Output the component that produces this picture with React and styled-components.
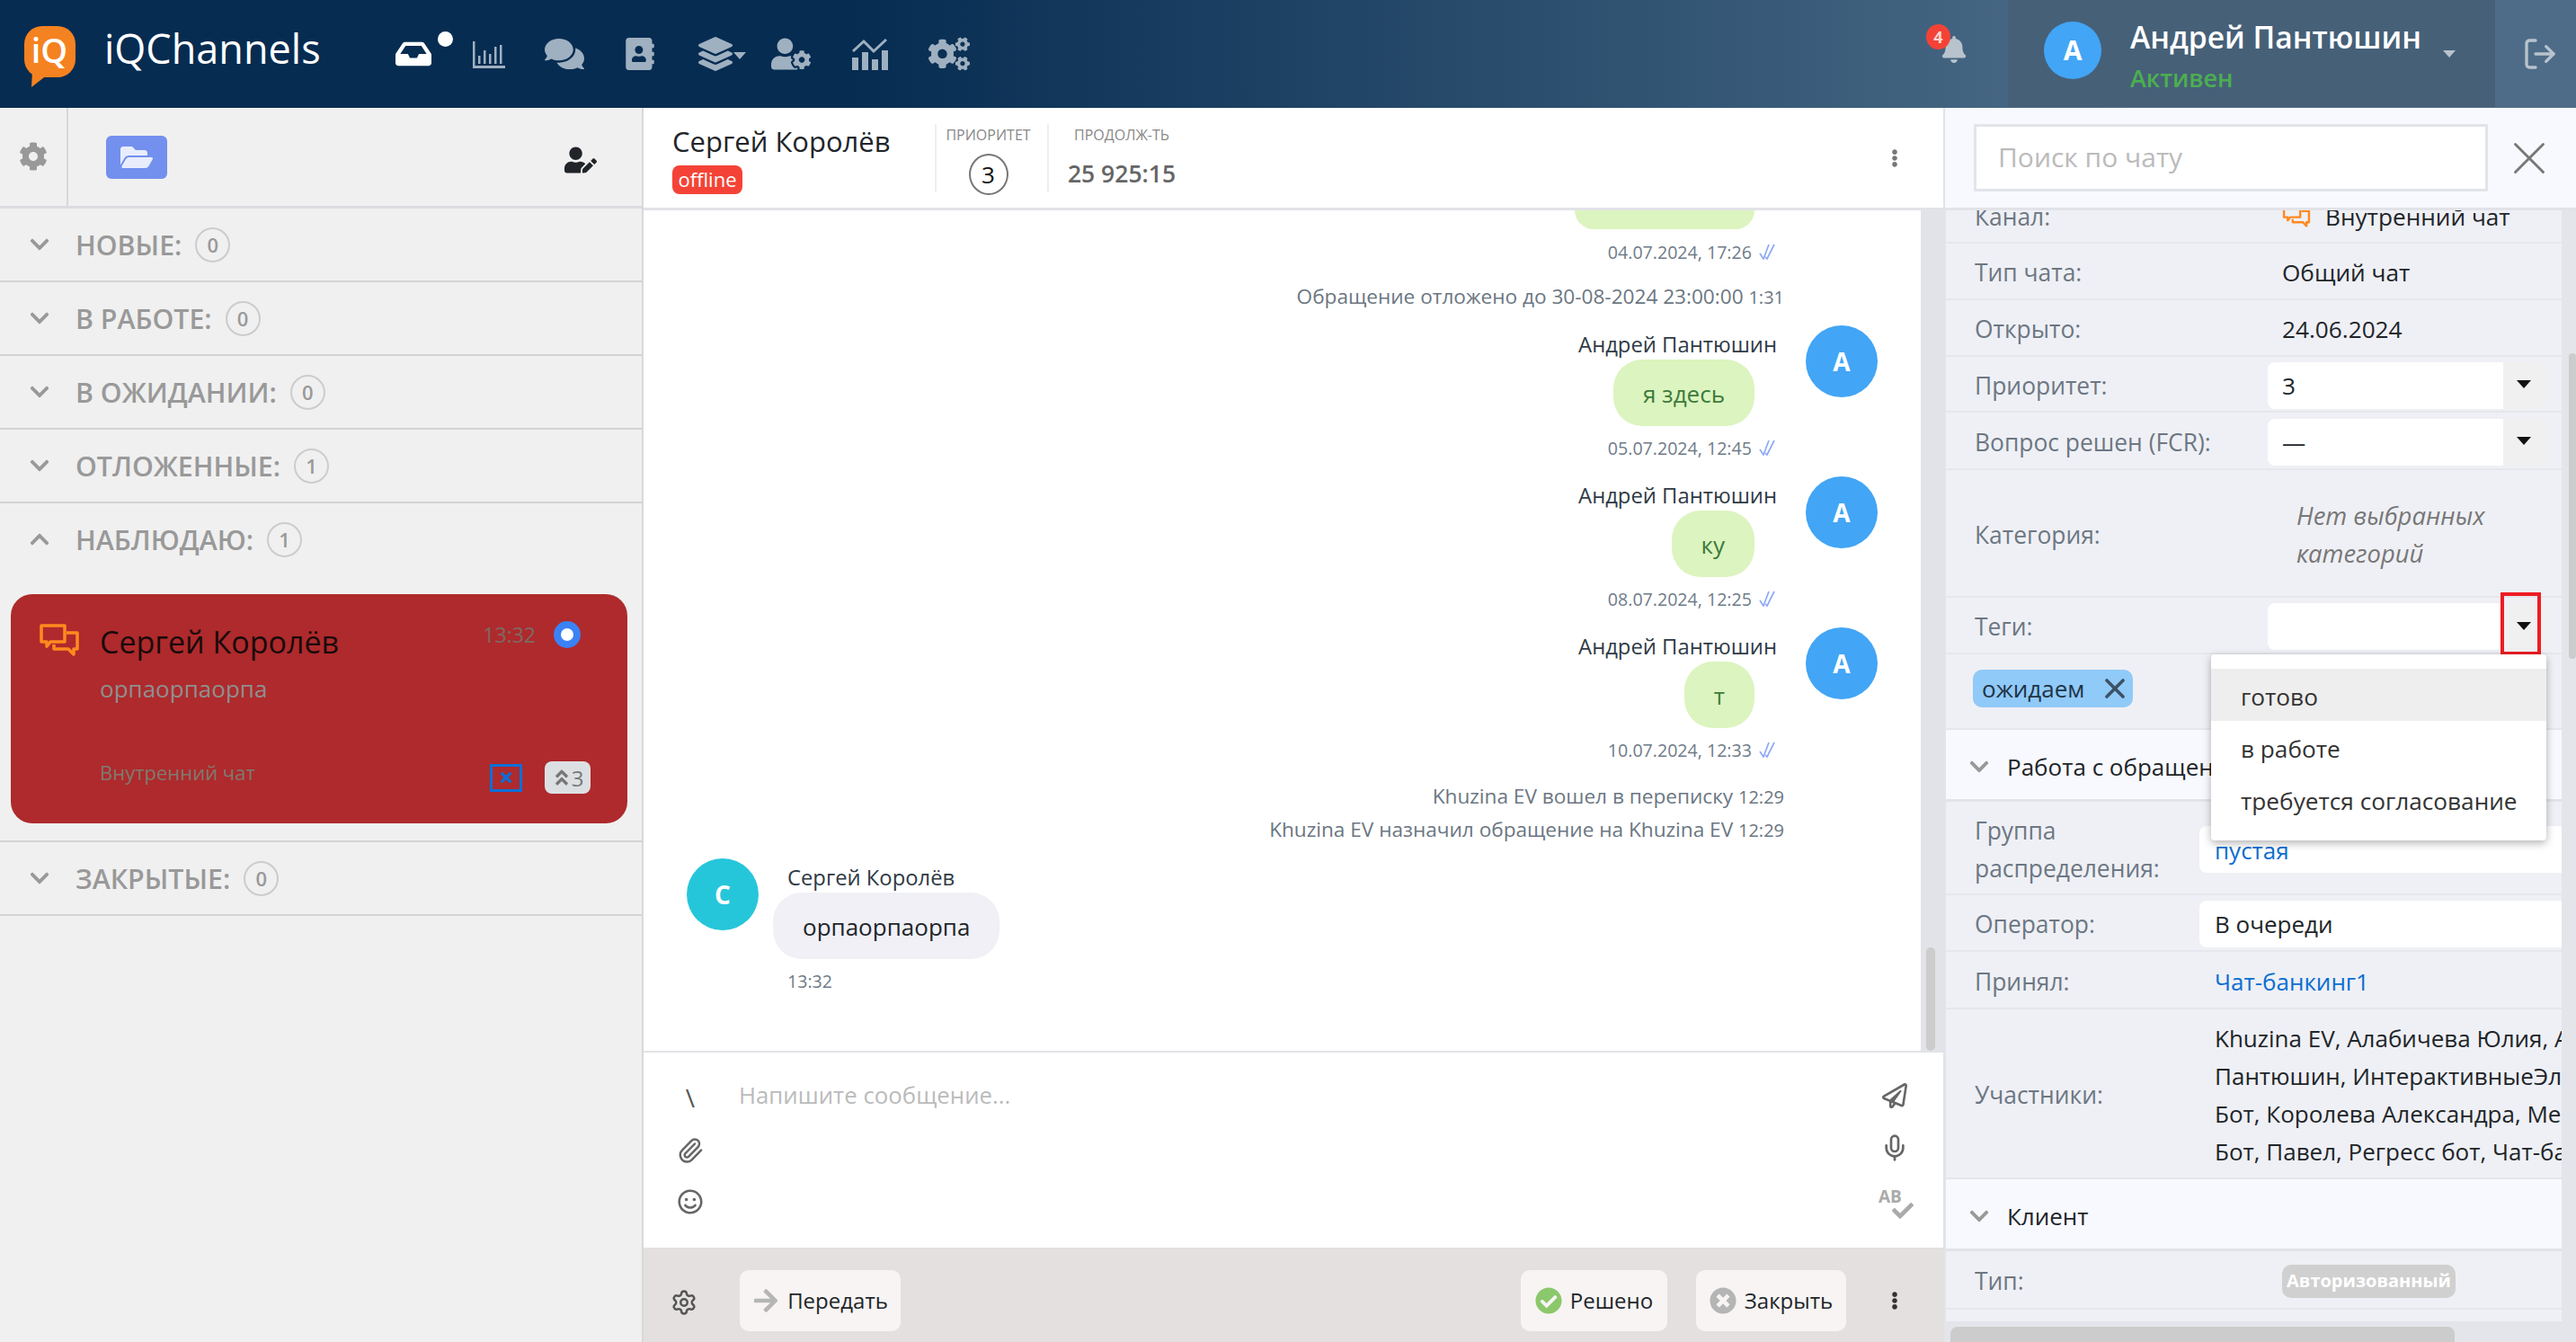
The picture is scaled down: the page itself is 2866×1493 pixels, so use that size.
import React from "react";
import styled, { createGlobalStyle } from "styled-components";
import {
    FaInbox,
    FaComments,
    FaAddressBook,
    FaLayerGroup,
    FaUserCog,
    FaCogs,
    FaCog,
    FaFolderOpen,
    FaUserEdit,
    FaBell,
    FaChevronDown,
    FaChevronUp,
    FaRegPaperPlane,
    FaRegSmile,
    FaCheck,
    FaCheckCircle,
    FaTimesCircle,
    FaArrowRight,
    FaAngleDoubleUp,
    FaTimes,
    FaEllipsisV,
} from "react-icons/fa";
import { LogOut, Paperclip, Mic, Settings, X } from "lucide-react";

const GlobalStyle = createGlobalStyle`
    html, body {
        margin: 0;
        padding: 0;
        width: 2866px;
        height: 1493px;
        overflow: hidden;
        font-family: "Open Sans", "Noto Sans", sans-serif;
        font-size: 26px;
        color: #212529;
    }
    * {
        box-sizing: border-box;
    }
`;

const Logo = () => (
    <svg width="58" height="70" viewBox="0 0 58 70">
        <rect x="0" y="0" width="57" height="57" rx="20" fill="#f58220" />
        <polygon points="9,50 26,54 8,68" fill="#f58220" />
        <text x="28" y="41" textAnchor="middle" fill="#fff" fontSize="38" fontWeight="600" fontFamily="Open Sans">
            iQ
        </text>
    </svg>
);

const ThinBars = () => (
    <svg width="36" height="32" viewBox="0 0 36 32" fill="#9fb0c0">
        <rect x="0" y="2" width="2.5" height="30" />
        <rect x="0" y="29" width="36" height="3" />
        <rect x="6" y="18" width="2.5" height="9" />
        <rect x="12" y="12" width="2.5" height="15" />
        <rect x="18" y="16" width="2.5" height="11" />
        <rect x="24" y="8" width="2.5" height="19" />
        <rect x="30" y="6" width="2.5" height="21" />
    </svg>
);

const ChartLine = () => (
    <svg width="42" height="36" viewBox="0 0 42 36" fill="#9fb0c0">
        <rect x="1" y="22" width="7" height="14" />
        <rect x="12" y="16" width="7" height="20" />
        <rect x="23" y="24" width="7" height="12" />
        <rect x="34" y="14" width="7" height="22" />
        <polyline points="2,15 14,4 25,15 39,2" fill="none" stroke="#9fb0c0" strokeWidth="3" />
    </svg>
);

const ChatOutline = ({ size = 46 }) => (
    <svg width={size} height={size * 0.85} viewBox="0 0 46 39" fill="none" stroke="#ff8a1f" strokeWidth="3.5" strokeLinejoin="round">
        <path d="M3 3h26v18H13l-4 5v-5H3z" />
        <path d="M31 11h12v18h-4v6l-6-6H17v-5" />
    </svg>
);

const DoubleCheck = () => (
    <svg width="20" height="18" viewBox="0 0 20 18" fill="none" stroke="#8ea9f5" strokeWidth="1.7">
        <path d="M1 11l4 6 6-16" />
        <path d="M7 15l2 2 8-16" />
    </svg>
);

const App = () => {
    return (
        <Page>
            <GlobalStyle />
            <TopBar>
                <Brand>
                    <Logo />
                    <BrandName>iQChannels</BrandName>
                </Brand>
                <Nav>
                    <NavItem $w={84}>
                        <FaInbox size={40} color="#fff" />
                        <NavDot />
                    </NavItem>
                    <NavItem $w={84}>
                        <ThinBars />
                    </NavItem>
                    <NavItem $w={84}>
                        <FaComments size={44} color="#9fb0c0" />
                    </NavItem>
                    <NavItem $w={84}>
                        <FaAddressBook size={36} color="#9fb0c0" />
                    </NavItem>
                    <NavItem $w={84}>
                        <FaLayerGroup size={38} color="#9fb0c0" />
                        <NavCaret />
                    </NavItem>
                    <NavItem $w={84}>
                        <FaUserCog size={44} color="#9fb0c0" />
                    </NavItem>
                    <NavItem $w={92}>
                        <ChartLine />
                    </NavItem>
                    <NavItem $w={84}>
                        <FaCogs size={46} color="#9fb0c0" />
                    </NavItem>
                </Nav>
                <BellBox>
                    <FaBell size={30} color="#b8c3cd" />
                    <BellBadge>4</BellBadge>
                </BellBox>
                <UserBox>
                    <UserAvatar>А</UserAvatar>
                    <UserInfo>
                        <UserName>Андрей Пантюшин</UserName>
                        <UserStatus>Активен</UserStatus>
                    </UserInfo>
                    <UserCaret />
                </UserBox>
                <ExitBox>
                    <LogOut size={40} color="#b8c3cd" strokeWidth={2} />
                </ExitBox>
            </TopBar>

            <Main>
                <Sidebar>
                    <SideTools>
                        <GearCell>
                            <FaCog size={32} color="#999" />
                        </GearCell>
                        <FolderButton>
                            <FaFolderOpen size={36} color="#e8edfc" />
                        </FolderButton>
                        <UserEditCell>
                            <FaUserEdit size={36} color="#212529" />
                        </UserEditCell>
                    </SideTools>
                    <Group title="НОВЫЕ:" count={0} />
                    <Group title="В РАБОТЕ:" count={0} />
                    <Group title="В ОЖИДАНИИ:" count={0} />
                    <Group title="ОТЛОЖЕННЫЕ:" count={1} />
                    <Group title="НАБЛЮДАЮ:" count={1} open />
                    <CardHolder>
                        <ChatCard>
                            <CardIcon>
                                <ChatOutline />
                            </CardIcon>
                            <CardBody>
                                <CardTop>
                                    <CardName>Сергей Королёв</CardName>
                                    <CardTime>13:32</CardTime>
                                    <CardDot />
                                </CardTop>
                                <CardText>орпаорпаорпа</CardText>
                                <CardBottom>
                                    <CardChannel>Внутренний чат</CardChannel>
                                    <CrossBox>
                                        <FaTimes size={18} color="#0a6fd8" />
                                    </CrossBox>
                                    <PriorityBadge>
                                        <FaAngleDoubleUp size={22} color="#777" />3
                                    </PriorityBadge>
                                </CardBottom>
                            </CardBody>
                        </ChatCard>
                    </CardHolder>
                    <Group title="ЗАКРЫТЫЕ:" count={0} />
                </Sidebar>

                <Center>
                    <ChatHead>
                        <HeadTitle>
                            <HeadName>Сергей Королёв</HeadName>
                            <OfflinePill>offline</OfflinePill>
                        </HeadTitle>
                        <HeadStat $w={125} $pr={8}>
                            <StatLabel>ПРИОРИТЕТ</StatLabel>
                            <PriorityCircle>3</PriorityCircle>
                        </HeadStat>
                        <HeadStat $w={160} $pl={4}>
                            <StatLabel>ПРОДОЛЖ-ТЬ</StatLabel>
                            <StatValue>25 925:15</StatValue>
                        </HeadStat>
                        <HeadMenu>
                            <FaEllipsisV size={20} color="#777" />
                        </HeadMenu>
                    </ChatHead>

                    <ThreadWrap>
                        <Thread>
                            <ClippedBubble />
                            <Stamp $mt={11} $mr={25}>
                                04.07.2024, 17:26 <DoubleCheck />
                            </Stamp>
                            <SystemLine $mt={20}>
                                Обращение отложено до 30-08-2024 23:00:00 <small>1:31</small>
                            </SystemLine>
                            <OutMessage $mt={16} text="я здесь" date="05.07.2024, 12:45" />
                            <OutMessage $mt={18} text="ку" date="08.07.2024, 12:25" />
                            <OutMessage $mt={18} text="т" date="10.07.2024, 12:33" />
                            <SystemLine $mt={22}>
                                Khuzina EV вошел в переписку <small>12:29</small>
                            </SystemLine>
                            <SystemLine $mt={5}>
                                Khuzina EV назначил обращение на Khuzina EV <small>12:29</small>
                            </SystemLine>
                            <InRow>
                                <Avatar $bg="#26c6da">С</Avatar>
                                <MessageCol $align="flex-start">
                                    <Author $ml={16}>Сергей Королёв</Author>
                                    <Bubble $bg="#f0f0f6" $color="#212529">
                                        орпаорпаорпа
                                    </Bubble>
                                    <InStamp>13:32</InStamp>
                                </MessageCol>
                            </InRow>
                        </Thread>
                        <ThreadTrack>
                            <ThreadThumb />
                        </ThreadTrack>
                    </ThreadWrap>

                    <Composer>
                        <ComposerIcons>
                            <Backslash>\</Backslash>
                            <Paperclip size={30} color="#666" />
                            <FaRegSmile size={28} color="#666" />
                        </ComposerIcons>
                        <Placeholder>Напишите сообщение...</Placeholder>
                        <ComposerIcons>
                            <FaRegPaperPlane size={28} color="#666" />
                            <Mic size={32} color="#666" />
                            <SpellIcon>
                                AB
                                <FaCheck size={24} color="#aaa" />
                            </SpellIcon>
                        </ComposerIcons>
                    </Composer>

                    <Footer>
                        <FooterGear>
                            <Settings size={30} color="#555" />
                        </FooterGear>
                        <FooterButton $ml={47} $w={179}>
                            <FaArrowRight size={30} color="#b5b5b5" />
                            Передать
                        </FooterButton>
                        <FooterSpacer />
                        <FooterButton $w={163}>
                            <FaCheckCircle size={30} color="#8bc86b" />
                            Решено
                        </FooterButton>
                        <FooterButton $ml={32} $w={167}>
                            <FaTimesCircle size={30} color="#b5b5b5" />
                            Закрыть
                        </FooterButton>
                        <FooterDots>
                            <FaEllipsisV size={20} color="#333" />
                        </FooterDots>
                    </Footer>
                </Center>

                <Details>
                    <SearchBar>
                        <SearchInput>Поиск по чату</SearchInput>
                        <X size={62} color="#777" strokeWidth={1.1} />
                    </SearchBar>
                    <DetailsBody>
                        <DetailsView>
                            <RowList>
                                <Row $h={62}>
                                    <Label $w={342}>Канал:</Label>
                                    <ChannelValue>
                                        <ChatOutline size={32} />
                                        Внутренний чат
                                    </ChannelValue>
                                </Row>
                                <Row $h={63}>
                                    <Label $w={342}>Тип чата:</Label>
                                    <Value>Общий чат</Value>
                                </Row>
                                <Row $h={63}>
                                    <Label $w={342}>Открыто:</Label>
                                    <Value>24.06.2024</Value>
                                </Row>
                                <Row $h={62}>
                                    <Label $w={326}>Приоритет:</Label>
                                    <Select value="3" />
                                </Row>
                                <Row $h={64}>
                                    <Label $w={326}>Вопрос решен (FCR):</Label>
                                    <Select value="—" />
                                </Row>
                                <Row $h={142}>
                                    <Label $w={358}>Категория:</Label>
                                    <CategoryNote>
                                        Нет выбранных
                                        <br />
                                        категорий
                                    </CategoryNote>
                                </Row>
                                <TagsRow $h={63}>
                                    <Label $w={326}>Теги:</Label>
                                    <Select value="" />
                                    <RedMark />
                                    <TagsMenu>
                                        <TagsOption $active>готово</TagsOption>
                                        <TagsOption>в работе</TagsOption>
                                        <TagsOption>требуется согласование</TagsOption>
                                    </TagsMenu>
                                </TagsRow>
                                <TagLine>
                                    <Tag>
                                        ожидаем
                                        <X size={36} color="#3d5266" strokeWidth={2.4} />
                                    </Tag>
                                </TagLine>
                                <SectionHead>
                                    <FaChevronDown size={24} color="#999" />
                                    Работа с обращением
                                </SectionHead>
                                <Row $h={104}>
                                    <Label $w={250}>
                                        Группа
                                        <br />
                                        распределения:
                                    </Label>
                                    <WideField $link>пустая</WideField>
                                </Row>
                                <Row $h={63}>
                                    <Label $w={250}>Оператор:</Label>
                                    <WideField>В очереди</WideField>
                                </Row>
                                <Row $h={64}>
                                    <Label $w={250}>Принял:</Label>
                                    <LinkValue>Чат-банкинг1</LinkValue>
                                </Row>
                                <Row $h={189}>
                                    <Label $w={250}>Участники:</Label>
                                    <Members>
                                        Khuzina EV, Алабичева Юлия, Андрей
                                        <br />
                                        Пантюшин, ИнтерактивныеЭлементы
                                        <br />
                                        Бот, Королева Александра, Менеджер
                                        <br />
                                        Бот, Павел, Регресс бот, Чат-банкинг1
                                    </Members>
                                </Row>
                                <SectionHead>
                                    <FaChevronDown size={24} color="#999" />
                                    Клиент
                                </SectionHead>
                                <Row $h={65}>
                                    <Label $w={342}>Тип:</Label>
                                    <TypePill>Авторизованный</TypePill>
                                </Row>
                                <Row $h={40} />
                            </RowList>
                        </DetailsView>
                        <VerticalTrack>
                            <VerticalThumb />
                        </VerticalTrack>
                        <HorizontalTrack>
                            <HorizontalThumb />
                        </HorizontalTrack>
                    </DetailsBody>
                </Details>
            </Main>
        </Page>
    );
};

const Group = ({ title, count, open }) => (
    <GroupRow $open={open}>
        <GroupChevron>
            {open ? <FaChevronUp size={24} color="#999" /> : <FaChevronDown size={24} color="#999" />}
        </GroupChevron>
        <GroupTitle>{title}</GroupTitle>
        <GroupCount>{count}</GroupCount>
    </GroupRow>
);

const OutMessage = ({ $mt, text, date }) => (
    <OutRow $mt={$mt}>
        <MessageCol $align="flex-end">
            <Author>Андрей Пантюшин</Author>
            <Bubble $bg="#dcf4bf" $color="#3d7a3d" $mr={25}>
                {text}
            </Bubble>
            <Stamp $mt={10}>
                {date} <DoubleCheck />
            </Stamp>
        </MessageCol>
        <Avatar $bg="#42a5f5">А</Avatar>
    </OutRow>
);

const Select = ({ value }) => (
    <SelectBox>
        <SelectField>{value}</SelectField>
        <SelectArrow>
            <Caret />
        </SelectArrow>
    </SelectBox>
);

export default App;

const Page = styled.div`
    width: 2866px;
    height: 1493px;
    display: flex;
    flex-direction: column;
    overflow: hidden;
    background: #fff;
`;

const TopBar = styled.header`
    height: 120px;
    flex: none;
    display: flex;
    align-items: center;
    background: linear-gradient(90deg, #062c51 33%, #4f6f8a 85%);
`;

const Brand = styled.div`
    display: flex;
    align-items: flex-start;
    gap: 31px;
    padding: 29px 0 0 27px;
    height: 120px;
    width: 418px;
`;

const BrandName = styled.span`
    color: #fff;
    font-size: 45px;
    line-height: 50px;
`;

const Nav = styled.nav`
    display: flex;
    align-items: center;
`;

const NavItem = styled.div`
    position: relative;
    width: ${({ $w }) => $w}px;
    height: 60px;
    display: flex;
    align-items: center;
    justify-content: center;
`;

const NavDot = styled.i`
    position: absolute;
    top: 5px;
    right: -2px;
    width: 17px;
    height: 17px;
    border-radius: 50%;
    background: #fff;
`;

const NavCaret = styled.i`
    position: absolute;
    right: 8px;
    top: 28px;
    border-left: 7px solid transparent;
    border-right: 7px solid transparent;
    border-top: 8px solid #9fb0c0;
`;

const BellBox = styled.div`
    position: relative;
    margin-left: auto;
    margin-right: 35px;
    width: 50px;
    height: 120px;
    padding-top: 40px;
    display: flex;
    justify-content: center;
`;

const BellBadge = styled.span`
    position: absolute;
    left: -6px;
    top: 27px;
    width: 27px;
    height: 28px;
    border-radius: 50%;
    background: #f44336;
    color: #ffd8d4;
    font-size: 18px;
    font-weight: 700;
    line-height: 28px;
    text-align: center;
`;

const UserBox = styled.div`
    width: 542px;
    height: 119px;
    align-self: flex-start;
    background: #466078;
    display: flex;
    align-items: flex-start;
    padding-left: 40px;
`;

const UserAvatar = styled.div`
    width: 64px;
    height: 64px;
    margin-top: 24px;
    border-radius: 50%;
    background: #42a5f5;
    color: #fff;
    font-size: 30px;
    font-weight: 700;
    line-height: 64px;
    text-align: center;
`;

const UserInfo = styled.div`
    margin-left: 32px;
    padding-top: 18px;
`;

const UserName = styled.div`
    color: #fff;
    font-size: 33.6px;
    font-weight: 600;
    line-height: 46px;
    white-space: nowrap;
`;

const UserStatus = styled.div`
    color: #4caf50;
    font-size: 27px;
    font-weight: 600;
    line-height: 46px;
`;

const UserCaret = styled.i`
    margin: 56px 0 0 24px;
    border-left: 7px solid transparent;
    border-right: 7px solid transparent;
    border-top: 8px solid #b8c3cd;
`;

const ExitBox = styled.div`
    width: 90px;
    height: 119px;
    align-self: flex-start;
    background: #4e6c88;
    display: flex;
    align-items: center;
    justify-content: center;
    padding-left: 10px;
`;

const Main = styled.div`
    flex: 1;
    min-height: 0;
    display: flex;
`;

const Sidebar = styled.aside`
    width: 716px;
    flex: none;
    background: #f0f0f0;
    border-right: 2px solid #d8d8d8;
`;

const SideTools = styled.div`
    height: 112px;
    display: flex;
    align-items: center;
    border-bottom: 3px solid #dcdce0;
`;

const GearCell = styled.div`
    width: 76px;
    height: 100%;
    border-right: 2px solid #d8d8d8;
    display: flex;
    align-items: center;
    justify-content: center;
    padding-bottom: 2px;
`;

const FolderButton = styled.div`
    margin-left: 42px;
    width: 68px;
    height: 48px;
    border-radius: 6px;
    background: #7390ee;
    display: flex;
    align-items: center;
    justify-content: center;
`;

const UserEditCell = styled.div`
    margin-left: auto;
    margin-right: 50px;
    margin-top: 6px;
    display: flex;
`;

const GroupRow = styled.div`
    height: 82px;
    display: flex;
    align-items: center;
    padding-left: 32px;
    border-bottom: 2px solid ${({ $open }) => ($open ? "transparent" : "#d3d3d3")};
`;

const GroupChevron = styled.span`
    width: 52px;
    display: flex;
`;

const GroupTitle = styled.span`
    color: #999;
    font-size: 30.3px;
    font-weight: 600;
`;

const GroupCount = styled.span`
    margin-left: 15px;
    width: 39px;
    height: 39px;
    border: 2px solid #ccc;
    border-radius: 50%;
    color: #999;
    font-size: 22px;
    font-weight: 600;
    line-height: 35px;
    text-align: center;
`;

const CardHolder = styled.div`
    height: 295px;
    padding: 19px 12px 0;
    border-bottom: 2px solid #d3d3d3;
`;

const ChatCard = styled.div`
    width: 686px;
    height: 255px;
    padding: 31px 0 0 31px;
    border-radius: 24px;
    background: #ae2a2c;
    display: flex;
`;

const CardIcon = styled.div`
    width: 68px;
    flex: none;
    padding-top: 1px;
`;

const CardBody = styled.div`
    flex: 1;
`;

const CardTop = styled.div`
    display: flex;
    align-items: center;
    height: 44px;
`;

const CardName = styled.span`
    font-size: 34px;
    color: #1a0a0a;
    white-space: nowrap;
`;

const CardTime = styled.span`
    margin-left: auto;
    margin-bottom: 16px;
    color: #7d6a66;
    font-size: 23px;
`;

const CardDot = styled.i`
    margin: 0 52px 16px 20px;
    width: 30px;
    height: 30px;
    border-radius: 50%;
    border: 8px solid #3b82f6;
    background: #fff;
`;

const CardText = styled.div`
    margin-top: 12px;
    color: #8f8f8f;
    font-size: 26px;
    line-height: 36px;
`;

const CardBottom = styled.div`
    display: flex;
    align-items: center;
    margin-top: 60px;
`;

const CardChannel = styled.span`
    color: #7f7a70;
    font-size: 22px;
    margin-bottom: 12px;
`;

const CrossBox = styled.span`
    margin-left: auto;
    width: 36px;
    height: 31px;
    border: 3px solid #0a6fd8;
    display: flex;
    align-items: center;
    justify-content: center;
`;

const PriorityBadge = styled.span`
    margin: 0 41px 0 25px;
    width: 51px;
    height: 36px;
    border-radius: 8px;
    background: #dde0e3;
    color: #777;
    font-size: 24px;
    display: flex;
    align-items: center;
    justify-content: center;
`;

const Center = styled.section`
    width: 1446px;
    flex: none;
    display: flex;
    flex-direction: column;
`;

const ChatHead = styled.div`
    height: 114px;
    flex: none;
    display: flex;
    align-items: center;
    padding-left: 32px;
    border-bottom: 3px solid #e2e3e8;
`;

const HeadTitle = styled.div`
    width: 292px;
    display: flex;
    flex-direction: column;
    align-items: flex-start;
`;

const HeadName = styled.div`
    font-size: 31px;
    line-height: 42px;
    font-weight: 500;
    color: #212529;
    white-space: nowrap;
`;

const OfflinePill = styled.span`
    margin-top: 6px;
    width: 78px;
    height: 32px;
    border-radius: 8px;
    background: #f44336;
    color: #fff;
    font-size: 22px;
    line-height: 31px;
    text-align: center;
`;

const HeadStat = styled.div`
    width: ${({ $w }) => $w}px;
    height: 76px;
    border-left: 2px solid #eee;
    display: flex;
    flex-direction: column;
    align-items: center;
    padding-right: ${({ $pr }) => $pr || 0}px;
    padding-left: ${({ $pl }) => $pl || 0}px;
`;

const StatLabel = styled.span`
    color: #888;
    font-size: 16px;
    line-height: 24px;
    white-space: nowrap;
`;

const PriorityCircle = styled.span`
    margin-top: 9px;
    width: 44px;
    height: 46px;
    border: 2px solid #777;
    border-radius: 50%;
    font-size: 26px;
    font-weight: 500;
    line-height: 42px;
    text-align: center;
    color: #111;
`;

const StatValue = styled.span`
    margin-top: 12px;
    color: #666;
    font-size: 26.5px;
    font-weight: 600;
    line-height: 38px;
    white-space: nowrap;
`;

const HeadMenu = styled.div`
    margin-left: auto;
    margin-right: 44px;
    display: flex;
`;

const ThreadWrap = styled.div`
    height: 935px;
    flex: none;
    display: flex;
`;

const Thread = styled.div`
    width: 1421px;
    flex: none;
    overflow: hidden;
    padding: 0 48px;
    display: flex;
    flex-direction: column;
`;

const ThreadTrack = styled.div`
    position: relative;
    flex: 1;
    background: #e2e3e8;
`;

const ThreadThumb = styled.div`
    position: absolute;
    left: 6px;
    top: 820px;
    width: 10px;
    height: 115px;
    border-radius: 5px;
    background: #ccc;
`;

const ClippedBubble = styled.div`
    align-self: flex-end;
    margin-right: 137px;
    width: 200px;
    height: 21px;
    flex: none;
    border-radius: 0 0 32px 32px;
    background: #dcf4bf;
`;

const Stamp = styled.div`
    display: flex;
    align-self: flex-end;
    align-items: center;
    gap: 3px;
    height: 28px;
    flex: none;
    margin-top: ${({ $mt }) => $mt || 0}px;
    margin-right: ${({ $mr }) => ($mr ? 112 : 0)}px;
    color: #6f7b88;
    font-size: 19.6px;
    white-space: pre;
`;

const SystemLine = styled.div`
    align-self: flex-end;
    height: 32px;
    flex: none;
    margin-top: ${({ $mt }) => $mt || 0}px;
    margin-right: 104px;
    color: #6b7682;
    font-size: 22.6px;
    line-height: 32px;
    white-space: nowrap;

    small {
        font-size: 20px;
    }
`;

const OutRow = styled.div`
    flex: none;
    display: flex;
    justify-content: flex-end;
    gap: 32px;
    margin-top: ${({ $mt }) => $mt || 0}px;
`;

const InRow = styled.div`
    flex: none;
    display: flex;
    gap: 16px;
    margin-top: 16px;
`;

const Avatar = styled.div`
    width: 80px;
    height: 80px;
    flex: none;
    border-radius: 50%;
    background: ${({ $bg }) => $bg};
    color: #fff;
    font-size: 28px;
    font-weight: 700;
    line-height: 80px;
    text-align: center;
`;

const MessageCol = styled.div`
    display: flex;
    flex-direction: column;
    align-items: ${({ $align }) => $align};
    padding-top: 4px;
`;

const Author = styled.div`
    height: 34px;
    margin-left: ${({ $ml }) => $ml || 0}px;
    color: #2f3a46;
    font-size: 23.8px;
    line-height: 34px;
`;

const Bubble = styled.div`
    height: 74px;
    padding: 0 33px;
    margin-right: ${({ $mr }) => $mr || 0}px;
    border-radius: 32px;
    background: ${({ $bg }) => $bg};
    color: ${({ $color }) => $color};
    font-size: 26px;
    line-height: 76px;
`;

const InStamp = styled.div`
    margin: 11px 0 0 16px;
    color: #6f7b88;
    font-size: 19.6px;
    line-height: 28px;
`;

const Composer = styled.div`
    height: 219px;
    flex: none;
    display: flex;
    border-top: 2px solid #e2e3e8;
    padding: 30px 38px 0 36px;
`;

const ComposerIcons = styled.div`
    width: 32px;
    height: 150px;
    display: flex;
    flex-direction: column;
    align-items: center;
    justify-content: space-between;
    padding-top: 4px;
`;

const Backslash = styled.span`
    color: #555;
    font-size: 28px;
    line-height: 32px;
    height: 32px;
`;

const Placeholder = styled.div`
    flex: 1;
    padding-left: 38px;
    color: #bbb;
    font-size: 25.8px;
    line-height: 34px;
`;

const SpellIcon = styled.span`
    position: relative;
    width: 36px;
    height: 30px;
    color: #aaa;
    font-size: 19px;
    font-weight: 700;
    line-height: 20px;

    svg {
        position: absolute;
        right: -3px;
        bottom: -8px;
    }
`;

const Footer = styled.div`
    height: 105px;
    flex: none;
    background: #e4e0df;
    display: flex;
    align-items: center;
    padding: 12px 0 0 30px;
`;

const FooterGear = styled.span`
    display: flex;
    padding-top: 5px;
`;

const FooterButton = styled.div`
    width: ${({ $w }) => $w}px;
    height: 68px;
    margin-left: ${({ $ml }) => $ml || 0}px;
    border-radius: 10px;
    background: #f7f4f3;
    display: flex;
    align-items: center;
    justify-content: center;
    gap: 9px;
    color: #212529;
    font-size: 24px;
    white-space: nowrap;
`;

const FooterSpacer = styled.div`
    flex: 1;
`;

const FooterDots = styled.div`
    width: 108px;
    display: flex;
    justify-content: center;
`;

const Details = styled.section`
    flex: 1;
    min-width: 0;
    display: flex;
    flex-direction: column;
    border-left: 2px solid #e2e3e8;
`;

const SearchBar = styled.div`
    height: 114px;
    flex: none;
    display: flex;
    align-items: center;
    gap: 15px;
    padding: 0 0 0 32px;
    background: #f8f9fe;
    border-bottom: 3px solid #e2e3e8;
`;

const SearchInput = styled.div`
    width: 572px;
    height: 75px;
    border: 3px solid #e2e4ea;
    background: #fff;
    padding-left: 24px;
    color: #bbb;
    font-size: 30px;
    line-height: 68px;
`;

const DetailsBody = styled.div`
    position: relative;
    flex: 1;
    min-height: 0;
    background: #e4e5ea;
`;

const DetailsView = styled.div`
    width: 685px;
    height: 100%;
    overflow: hidden;
    margin-left: 1px;
`;

const RowList = styled.div`
    margin-top: -25px;
`;

const Row = styled.div`
    height: ${({ $h }) => $h}px;
    display: flex;
    align-items: center;
    padding: 3px 0 0 32px;
    background: #eff0f5;
    border-bottom: 2px solid #e6e7ec;
`;

const TagsRow = styled(Row)`
    position: relative;
    z-index: 2;
`;

const Label = styled.div`
    width: ${({ $w }) => $w}px;
    flex: none;
    color: #6c7783;
    font-size: 26.4px;
    line-height: 42px;
    white-space: nowrap;
`;

const Value = styled.div`
    color: #212529;
    font-size: 26.2px;
`;

const ChannelValue = styled(Value)`
    display: flex;
    align-items: center;
    gap: 16px;
`;

const SelectBox = styled.div`
    display: flex;
    height: 52px;
    border-radius: 8px;
    overflow: hidden;
`;

const SelectField = styled.div`
    width: 262px;
    background: #fff;
    padding-left: 16px;
    font-size: 26.2px;
    line-height: 52px;
    color: #212529;
`;

const SelectArrow = styled.div`
    width: 48px;
    background: #f0f0f0;
    display: flex;
    align-items: center;
    justify-content: center;
    padding: 0 3px 2px 0;
`;

const Caret = styled.i`
    border-left: 8px solid transparent;
    border-right: 8px solid transparent;
    border-top: 9px solid #111;
`;

const RedMark = styled.div`
    position: absolute;
    left: 617px;
    top: -6px;
    width: 45px;
    height: 70px;
    border: 4px solid #ed1c24;
`;

const TagsMenu = styled.ul`
    position: absolute;
    left: 295px;
    top: 63px;
    width: 373px;
    height: 207px;
    margin: 0;
    padding: 16px 0 0;
    list-style: none;
    background: #fff;
    border-radius: 4px;
    box-shadow: 0 3px 10px rgba(0, 0, 0, 0.3);
`;

const TagsOption = styled.li`
    height: 58px;
    padding-left: 33px;
    background: ${({ $active }) => ($active ? "#eee" : "#fff")};
    color: #333;
    font-size: 26.2px;
    line-height: 62px;
    white-space: nowrap;
`;

const CategoryNote = styled.div`
    color: #777;
    font-size: 27.4px;
    font-style: italic;
    line-height: 42px;
`;

const TagLine = styled(Row)`
    height: 84px;
    padding: 17px 0 0 30px;
    align-items: flex-start;
`;

const Tag = styled.span`
    width: 178px;
    height: 42px;
    border-radius: 10px;
    background: #90caf9;
    display: flex;
    align-items: center;
    justify-content: space-between;
    padding: 0 2px 0 10px;
    color: #1f3347;
    font-size: 26px;
    line-height: 42px;
`;

const SectionHead = styled.div`
    height: 80px;
    display: flex;
    align-items: center;
    gap: 19px;
    padding: 4px 0 0 25px;
    background: #f8f9fe;
    border-bottom: 3px solid #e2e3e8;
    font-size: 26px;
    font-weight: 500;
    color: #212529;
    white-space: nowrap;
`;

const WideField = styled.div`
    flex: 1;
    height: 52px;
    border-radius: 8px 0 0 8px;
    background: #fff;
    padding-left: 17px;
    color: ${({ $link }) => ($link ? "#0a6ed1" : "#212529")};
    font-size: 26px;
    line-height: ${({ $link }) => ($link ? "54px" : "52px")};
`;

const LinkValue = styled.div`
    margin-left: 17px;
    color: #0a6ed1;
    font-size: 26px;
`;

const Members = styled.div`
    margin-left: 17px;
    color: #212529;
    font-size: 26px;
    line-height: 42px;
    white-space: nowrap;
`;

const TypePill = styled.span`
    width: 193px;
    height: 37px;
    border-radius: 10px;
    background: #d0d0d0;
    color: #fff;
    font-size: 20px;
    font-weight: 700;
    line-height: 36px;
    text-align: center;
`;

const VerticalTrack = styled.div`
    position: absolute;
    right: 0;
    top: 0;
    width: 8px;
    height: 100%;
`;

const VerticalThumb = styled.div`
    position: absolute;
    top: 159px;
    width: 8px;
    height: 340px;
    border-radius: 4px;
    background: #ccc;
`;

const HorizontalTrack = styled.div`
    position: absolute;
    left: 0;
    bottom: 0;
    width: 689px;
    height: 23px;
    background: #e4e5ea;
`;

const HorizontalThumb = styled.div`
    position: absolute;
    left: 6px;
    bottom: 0;
    width: 561px;
    height: 17px;
    border-radius: 8px 8px 0 0;
    background: #ccc;
`;
